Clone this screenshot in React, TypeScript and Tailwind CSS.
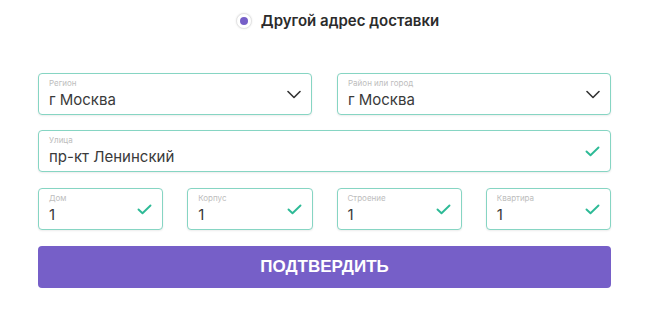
import React from "react";

const font = { fontFamily: "Inter, 'Noto Sans', sans-serif" };

function Chevron() {
  return (
    <svg width="14" height="9" viewBox="0 0 14 9" className="shrink-0">
      <path d="M1 1.5 L7 7.5 L13 1.5" fill="none" stroke="#333" strokeWidth="1.6" strokeLinecap="round" strokeLinejoin="round" />
    </svg>
  );
}

function Check() {
  return (
    <svg width="15" height="11" viewBox="0 0 15 11" className="shrink-0">
      <path d="M1.5 5.5 L5.5 9.3 L13.5 1.5" fill="none" stroke="#2dba96" strokeWidth="1.9" strokeLinecap="round" strokeLinejoin="round" />
    </svg>
  );
}

function Field({ label, value, icon }: { label: string; value: string; icon: "chevron" | "check" }) {
  return (
    <div className="flex h-[42px] items-center rounded-[4px] border border-[#86d5c3] bg-white pl-[10px] pr-[10px] shadow-[0_1px_2px_rgba(0,0,0,0.08)]">
      <div className="flex min-w-0 flex-1 flex-col">
        <span className="text-[8px] leading-[10px] text-[#bdbdbd]">{label}</span>
        <span className="mt-[2px] text-[15px] leading-[20px] text-[#3a3a3a]">{value}</span>
      </div>
      {icon === "chevron" ? <Chevron /> : <Check />}
    </div>
  );
}

export default function App() {
  return (
    <div className="h-[319px] w-[650px] bg-white" style={font}>
      <div className="flex items-center justify-center pt-[13px] pl-[25px]">
        <div className="flex h-[16px] w-[16px] items-center justify-center rounded-full border border-[#e4e4e4] bg-white shadow-[0_0_2px_rgba(0,0,0,0.1)]">
          <div className="h-[8px] w-[8px] rounded-full bg-[#765fc8]" />
        </div>
        <span className="ml-[9px] text-[15px] font-semibold leading-[16px] text-[#2b2b2b]">Другой адрес доставки</span>
      </div>
      <div className="ml-[38px] mt-[44px] flex w-[573px] flex-col">
        <div className="grid grid-cols-2 gap-x-[25px]">
          <Field label="Регион" value="г Москва" icon="chevron" />
          <Field label="Район или город" value="г Москва" icon="chevron" />
        </div>
        <div className="mt-[15px]">
          <Field label="Улица" value="пр-кт Ленинский" icon="check" />
        </div>
        <div className="mt-[16px] grid grid-cols-4 gap-x-[24px]">
          <Field label="Дом" value="1" icon="check" />
          <Field label="Корпус" value="1" icon="check" />
          <Field label="Строение" value="1" icon="check" />
          <Field label="Квартира" value="1" icon="check" />
        </div>
        <button
          className="mt-[16px] flex h-[42px] items-center justify-center rounded-[4px] bg-[#765fc8] text-[17px] font-bold text-white"
          style={{ fontFamily: "'Liberation Sans', Arial, sans-serif" }}
        >
          ПОДТВЕРДИТЬ
        </button>
      </div>
    </div>
  );
}
